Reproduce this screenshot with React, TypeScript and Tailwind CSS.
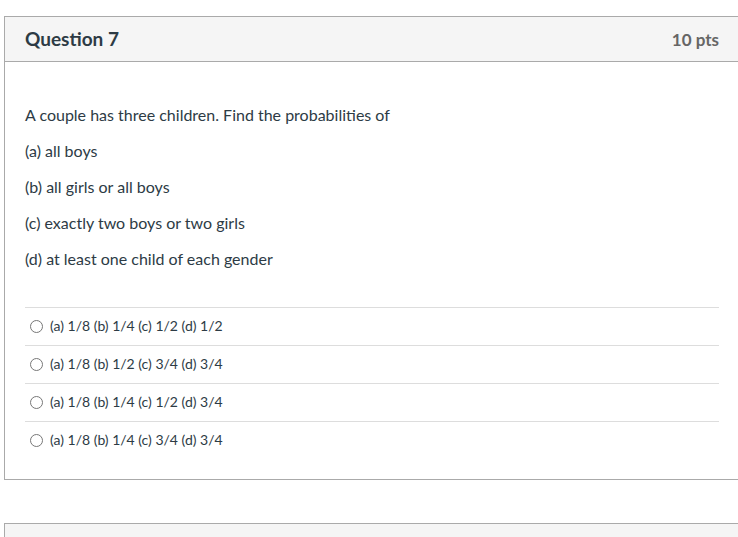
const ANSWERS = [
  "(a) 1/8 (b) 1/4 (c) 1/2 (d) 1/2",
  "(a) 1/8 (b) 1/2 (c) 3/4 (d) 3/4",
  "(a) 1/8 (b) 1/4 (c) 1/2 (d) 3/4",
  "(a) 1/8 (b) 1/4 (c) 3/4 (d) 3/4",
];

const LINES = [
  "A couple has three children. Find the probabilities of",
  "(a) all boys",
  "(b) all girls or all boys",
  "(c) exactly two boys or two girls",
  "(d) at least one child of each gender",
];

export default function App() {
  return (
    <div className="min-h-[537px] bg-white pt-[16px] pl-[4px] font-['Lato','Liberation_Sans',sans-serif] text-[#2d3b45] overflow-hidden">
      <div className="border border-r-0 border-[#aaaaaa]">
        <div className="h-[45px] bg-[#f5f5f5] border-b border-[#aaaaaa] flex items-center justify-between pl-[20px] pr-[19px]">
          <h2 className="text-[19px] font-bold">Question 7</h2>
          <span className="text-[17px] font-bold text-[#666666] pt-[1px]">10 pts</span>
        </div>

        <div className="pt-[35px] pl-[20px] pr-[19px] pb-[20px]">
          <div className="text-[16px]">
            {LINES.map((l) => (
              <p key={l} className="leading-[36px]">{l}</p>
            ))}
          </div>

          <div className="mt-[30px]">
            {ANSWERS.map((a) => (
              <label key={a} className="flex items-center h-[38px] pb-[3px] border-t border-[#dddddd] text-[14px]">
                <span className="ml-[5px] mr-[7px] mt-[2px] h-[13px] w-[13px] rounded-full border border-[#777777] bg-white" />
                {a}
              </label>
            ))}
          </div>
        </div>
      </div>

      <div className="mt-[43px] h-[40px] bg-[#f5f5f5] border border-r-0 border-b-0 border-[#aaaaaa]" />
    </div>
  );
}
